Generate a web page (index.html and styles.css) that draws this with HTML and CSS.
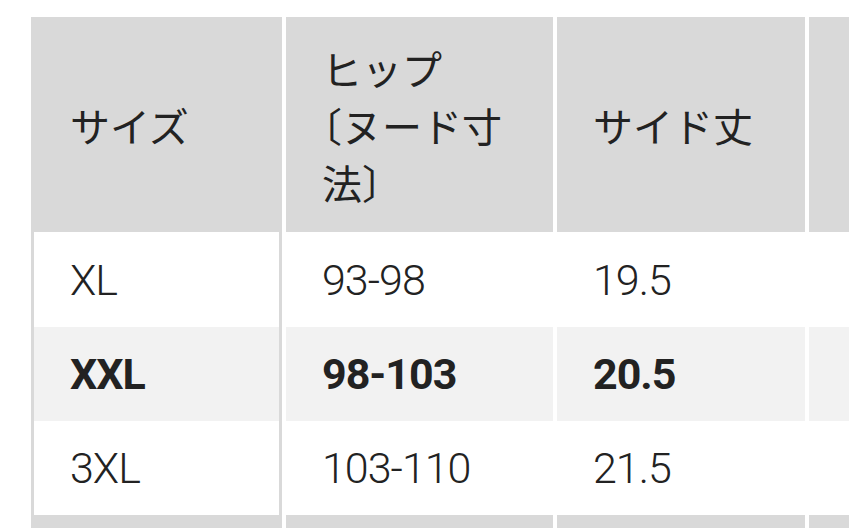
FILE: index.html
```html
<!DOCTYPE html>
<html lang="ja">
<head>
<meta charset="utf-8">
<title>サイズ表</title>
<link rel="stylesheet" href="styles.css">
</head>
<body>
<div class="wrap">
  <table class="size-table">
    <colgroup>
      <col class="c1"><col class="c2"><col class="c3"><col class="c4">
    </colgroup>
    <thead>
      <tr class="head">
        <th class="first">サイズ</th>
        <th>ヒップ〔ヌード寸法〕</th>
        <th>サイド丈</th>
        <th></th>
      </tr>
    </thead>
    <tbody>
      <tr class="row">
        <td class="first">XL</td>
        <td>93-98</td>
        <td>19.5</td>
        <td></td>
      </tr>
      <tr class="row alt current">
        <td class="first">XXL</td>
        <td>98-103</td>
        <td>20.5</td>
        <td></td>
      </tr>
      <tr class="row">
        <td class="first">3XL</td>
        <td>103-110</td>
        <td>21.5</td>
        <td></td>
      </tr>
      <tr class="next">
        <td class="first"></td>
        <td></td>
        <td></td>
        <td></td>
      </tr>
    </tbody>
  </table>
</div>
</body>
</html>
```

FILE: styles.css
```css
html, body {
  margin: 0;
  padding: 0;
  background: #ffffff;
  overflow: hidden;
}

.wrap {
  width: 849px;
  height: 528px;
  overflow: hidden;
  padding-top: 17px;
  box-sizing: border-box;
}

.size-table {
  margin-left: 27px;
  table-layout: fixed;
  width: 1036px;
  border-collapse: separate;
  border-spacing: 4px 0;
  color: #222222;
}

.c1 { width: 251px; }
.c2 { width: 267px; }
.c3 { width: 248px; }
.c4 { width: 250px; }

.size-table th,
.size-table td {
  padding: 0 36px;
  text-align: left;
  vertical-align: middle;
  box-sizing: border-box;
}

.size-table th.first,
.size-table td.first {
  padding-left: 39px;
}

.head th {
  height: 215px;
  background: #d9d9d9;
  font-family: "Noto Sans CJK JP", sans-serif;
  font-weight: 400;
  font-size: 40px;
  line-height: 57px;
  text-spacing-trim: trim-start;
  padding-top: 2px;
}

.row td {
  height: 94px;
  background: #ffffff;
  font-family: Roboto, "Liberation Sans", sans-serif;
  font-weight: 300;
  font-size: 43px;
  letter-spacing: -1px;
  line-height: 50px;
  padding-top: 0;
}

.row:first-child td {
  height: 95px;
}

.row.alt td {
  background: #f2f2f2;
}

.row.current td {
  font-weight: 700;
}

.row td.first,
.next td.first {
  box-shadow: inset 3px 0 0 #d9d9d9, inset -3px 0 0 #d9d9d9;
}

.next td {
  height: 60px;
  background: #d9d9d9;
}
```
